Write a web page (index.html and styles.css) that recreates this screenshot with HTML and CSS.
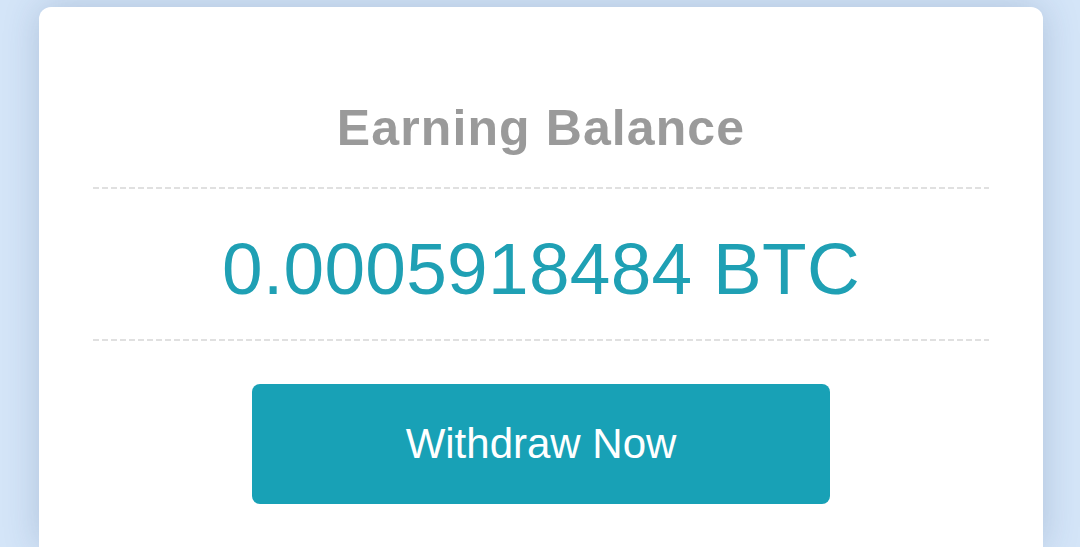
FILE: index.html
```html
<!DOCTYPE html>
<html lang="en">
<head>
    <meta charset="UTF-8">
    <meta name="viewport" content="width=device-width, initial-scale=1.0">
    <title>Earning Balance</title>
    <link rel="stylesheet" href="styles.css">
</head>
<body>
    <div class="card">
        <h2 class="title">Earning Balance</h2>
        <div class="dash"></div>
        <div class="amount">0.0005918484 BTC</div>
        <div class="dash"></div>
        <button class="withdraw" type="button">Withdraw Now</button>
    </div>
</body>
</html>
```

FILE: styles.css
```css
html, body {
    height: 100%;
}
body {
    margin: 0;
    padding: 7px 37px 0 39px;
    box-sizing: border-box;
    overflow: hidden;
    background-color: #d4e5f8;
    font-family: "Liberation Sans", Arial, sans-serif;
}
.card {
    background: white;
    height: 540px;
    box-sizing: border-box;
    border-radius: 12px 12px 0 0;
    box-shadow: 0 0 36px rgba(40, 70, 120, 0.22);
    padding: 91px 54px 0 54px;
    display: flex;
    flex-direction: column;
    align-items: center;
}
.title {
    margin: 0;
    font-size: 50px;
    line-height: 60px;
    font-weight: bold;
    letter-spacing: 1.1px;
    color: #9a9a9a;
    padding-bottom: 29px;
}
.dash {
    align-self: stretch;
    height: 2px;
    background: repeating-linear-gradient(90deg, #e0e0e0 0 6px, transparent 6px 9px);
}
.amount {
    font-size: 73px;
    line-height: 80px;
    letter-spacing: 0.3px;
    color: #1fa0b4;
    padding: 40px 0 30px;
}
.withdraw {
    margin-top: 43px;
    width: 578px;
    height: 120px;
    border: none;
    border-radius: 8px;
    background-color: #18a1b6;
    color: white;
    font-family: "Liberation Sans", Arial, sans-serif;
    font-size: 42px;
    cursor: pointer;
}
```
